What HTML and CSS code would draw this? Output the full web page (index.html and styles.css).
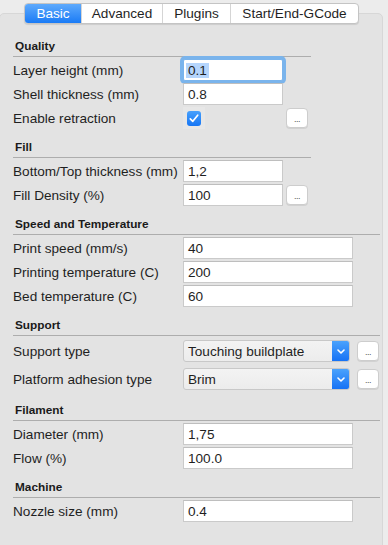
FILE: index.html
```html
<!DOCTYPE html>
<html>
<head>
<meta charset="utf-8">
<link rel="stylesheet" href="styles.css">
</head>
<body>
<div class="window">
  <div class="tabs">
    <div class="tab tab-basic active">Basic</div>
    <div class="tab tab-advanced">Advanced</div>
    <div class="tab tab-plugins">Plugins</div>
    <div class="tab tab-gcode">Start/End-GCode</div>
  </div>
  <div class="panel">
    <section class="group group-narrow">
      <div class="heading">Quality</div>
      <div class="rows">
        <div class="row"><span class="label">Layer height (mm)</span><span class="field focused"><span class="sel">0.1</span></span></div>
        <div class="row"><span class="label">Shell thickness (mm)</span><span class="field">0.8</span></div>
        <div class="row"><span class="label">Enable retraction</span><span class="check-cell"><span class="check-back"><span class="checkbox"><svg width="10" height="9" viewBox="0 0 10 9"><path d="M1.3 4.8 L3.8 7.3 L8.7 1.2" fill="none" stroke="#fff" stroke-width="1.7" stroke-linecap="round" stroke-linejoin="round"/></svg></span></span></span><span class="btn">...</span></div>
      </div>
    </section>
    <section class="group group-narrow">
      <div class="heading">Fill</div>
      <div class="rows">
        <div class="row"><span class="label">Bottom/Top thickness (mm)</span><span class="field">1,2</span></div>
        <div class="row"><span class="label">Fill Density (%)</span><span class="field">100</span><span class="btn">...</span></div>
      </div>
    </section>
    <section class="group group-wide">
      <div class="heading">Speed and Temperature</div>
      <div class="rows">
        <div class="row"><span class="label">Print speed (mm/s)</span><span class="field">40</span></div>
        <div class="row"><span class="label">Printing temperature (C)</span><span class="field">200</span></div>
        <div class="row"><span class="label">Bed temperature (C)</span><span class="field">60</span></div>
      </div>
    </section>
    <section class="group group-wide">
      <div class="heading">Support</div>
      <div class="rows">
        <div class="row row-select"><span class="label">Support type</span><span class="select"><span class="select-text">Touching buildplate</span><span class="select-arrow"><svg width="8" height="5" viewBox="0 0 8 5"><path d="M1 1 L4 4 L7 1" fill="none" stroke="#fff" stroke-width="1.6" stroke-linecap="round" stroke-linejoin="round"/></svg></span></span><span class="btn">...</span></div>
        <div class="row row-select"><span class="label">Platform adhesion type</span><span class="select"><span class="select-text">Brim</span><span class="select-arrow"><svg width="8" height="5" viewBox="0 0 8 5"><path d="M1 1 L4 4 L7 1" fill="none" stroke="#fff" stroke-width="1.6" stroke-linecap="round" stroke-linejoin="round"/></svg></span></span><span class="btn">...</span></div>
      </div>
    </section>
    <section class="group group-wide">
      <div class="heading">Filament</div>
      <div class="rows">
        <div class="row"><span class="label">Diameter (mm)</span><span class="field">1,75</span></div>
        <div class="row"><span class="label">Flow (%)</span><span class="field">100.0</span></div>
      </div>
    </section>
    <section class="group group-wide">
      <div class="heading">Machine</div>
      <div class="rows">
        <div class="row"><span class="label">Nozzle size (mm)</span><span class="field">0.4</span></div>
      </div>
    </section>
  </div>
</div>
</body>
</html>
```
FILE: styles.css
```css
html, body {
  margin: 0;
  padding: 0;
}
body {
  background: #ececec;
  font-family: "Liberation Sans", Arial, sans-serif;
  font-size: 13.6px;
  color: #1f1f1f;
}
.window {
  width: 388px;
  height: 545px;
  overflow: hidden;
  padding-top: 3px;
  box-sizing: border-box;
}
.tabs {
  position: relative;
  z-index: 1;
  display: flex;
  width: max-content;
  height: 21px;
  margin-left: 24px;
  background: #fff;
  border: 1px solid #c4c4c4;
  border-radius: 4px;
  box-sizing: border-box;
  overflow: hidden;
  box-shadow: 0 1px 1px rgba(0, 0, 0, 0.1);
}
.tab {
  display: flex;
  align-items: center;
  justify-content: center;
  height: 100%;
  box-sizing: border-box;
  border-left: 1px solid #d5d5d5;
  color: #1f1f1f;
  font-size: 13.6px;
}
.tab-basic { width: 56px; border-left: none; }
.tab-advanced { width: 81px; }
.tab-plugins { width: 68px; }
.tab-gcode { width: 128px; }
.tab.active {
  background: linear-gradient(#5eaafc, #1a7bf6);
  color: #fff;
}
.panel {
  margin-top: -11px;
  margin-left: -1px;
  width: 384px;
  min-height: 560px;
  box-sizing: border-box;
  background: #e3e3e3;
  border: 1px solid #d7d7d7;
  border-radius: 5px;
  padding: 26px 0 0 13px;
}
.group + .group {
  margin-top: 12px;
}
.group-narrow { width: 298px; }
.group-wide { width: 367px; }
.heading {
  font-weight: bold;
  font-size: 11.8px;
  line-height: 13px;
  padding: 0 0 3px 2px;
  border-bottom: 1px solid #adadad;
  color: #1a1a1a;
}
.rows {
  display: flex;
  flex-direction: column;
  gap: 2px;
  margin-top: 2px;
}
.row {
  display: flex;
  align-items: center;
  height: 22px;
}
.row-select {
  height: 26px;
}
.label {
  width: 170px;
  flex: none;
  white-space: nowrap;
}
.field {
  display: flex;
  align-items: center;
  box-sizing: border-box;
  width: 100px;
  height: 22px;
  padding-left: 4px;
  background: #fff;
  border: 1px solid #cacaca;
  border-top-color: #bebebe;
  color: #1f1f1f;
}
.group-wide .field {
  width: 170px;
}
.field.focused {
  border-color: #7ab4ec;
  border-radius: 2px;
  box-shadow: 0 0 0 3px #7ab4ec;
  padding-left: 2px;
}
.sel {
  background: #b5d5fc;
  padding: 0 2px;
  line-height: 15px;
}
.check-cell {
  width: 100px;
  height: 22px;
  display: flex;
  align-items: center;
}
.check-back {
  width: 22px;
  height: 22px;
  display: flex;
  align-items: center;
  justify-content: center;
  background: #e7e7e7;
}
.checkbox {
  width: 14px;
  height: 15px;
  border-radius: 3px;
  background: linear-gradient(#47a0fc, #1676f5);
  display: flex;
  align-items: center;
  justify-content: center;
}
.btn {
  width: 22px;
  height: 20px;
  margin-left: 3px;
  box-sizing: border-box;
  background: #fff;
  border: 1px solid #cdcdcd;
  border-radius: 4px;
  box-shadow: 0 1px 0 rgba(0, 0, 0, 0.08);
  font-size: 9px;
  line-height: 20px;
  text-align: center;
  color: #555;
  letter-spacing: -0.5px;
}
.group-wide .btn {
  margin-left: 7px;
}
.select {
  display: flex;
  width: 167px;
  height: 22px;
  box-sizing: border-box;
  border: 1px solid #c8c8c8;
  border-radius: 3px;
  background: linear-gradient(#f3f3f3, #ececec);
  overflow: hidden;
}
.select-text {
  flex: 1;
  display: flex;
  align-items: center;
  padding-left: 4px;
  color: #1f1f1f;
}
.select-arrow {
  width: 17px;
  display: flex;
  align-items: center;
  justify-content: center;
  background: linear-gradient(#4aa2fc, #1672f5);
}
```
